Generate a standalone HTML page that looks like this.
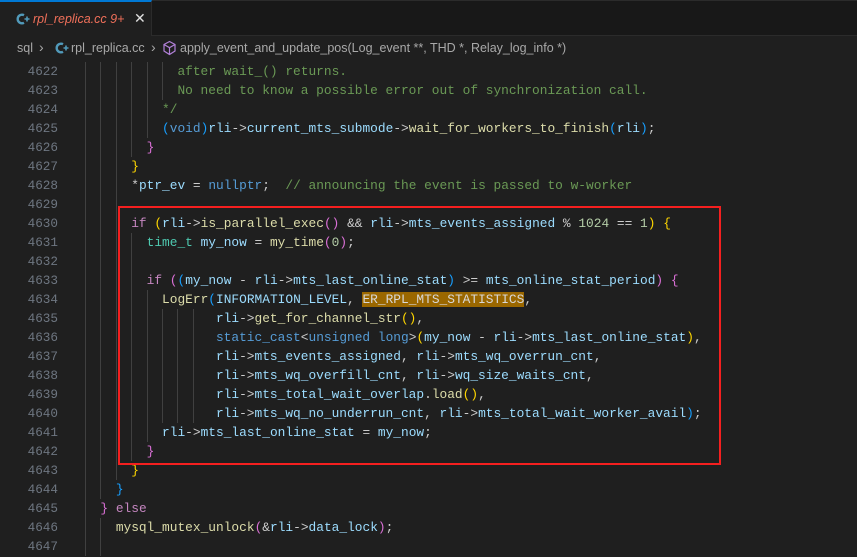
<!DOCTYPE html>
<html><head><meta charset="utf-8"><style>
*{margin:0;padding:0;box-sizing:border-box}
body{width:857px;height:555px;overflow:hidden;background:#1f1f1f;font-family:"Liberation Sans",sans-serif;position:relative}
.tabbar{position:absolute;left:0;top:0;width:857px;height:36px;background:#181818;border-top:1px solid #2b2b2b;border-bottom:1px solid #2b2b2b}
.tab{position:absolute;left:0;top:-1px;width:152px;height:36px;background:#1f1f1f;border-top:2px solid #0078d4;border-right:1px solid #2b2b2b}
.tab .nm{position:absolute;left:33px;top:10px;font-size:12.5px;font-style:italic;color:#f0705a}
.tab .x{position:absolute;left:134px;top:8px;font-size:14px;color:#e0e0e0}
.bc{position:absolute;left:0;top:36px;width:857px;height:24px;font-size:12.5px;color:#a9a9a9}
.bc span{position:absolute;top:5px}
.code{position:absolute;left:0;top:0;font-family:"Liberation Mono",monospace;font-size:12.85px;white-space:pre}
.ln{position:absolute;width:58px;text-align:right;color:#6e7681;line-height:19px;font-size:12.67px}
.l{position:absolute;left:85px;line-height:20px;height:19px;color:#cccccc}
i{display:inline-block;width:2ch;height:19px;vertical-align:top;box-shadow:inset 1px 0 #404040}
.v{color:#9cdcfe}.f{color:#dcdcaa}.k{color:#569cd6}.c{color:#c586c0}.t{color:#4ec9b0}.m{color:#6a9955}.n{color:#b5cea8}
.y{color:#ffd700}.p{color:#da70d6}.b{color:#179fff}
.hl{background:#9a6700;color:#d8d8d8}
.box{position:absolute;left:118px;top:206px;width:603px;height:259px;border:2px solid #f41f1f}
</style></head><body>
<div class="tabbar"><div class="tab">
<svg style="position:absolute;left:15px;top:10px" width="16" height="14" viewBox="0 0 16 14"><path d="M9 3.2A4.3 4.3 0 1 0 9 10.8" fill="none" stroke="#519aba" stroke-width="2.4"/><path d="M9.5 7h5M12 4.5v5" stroke="#519aba" stroke-width="1.6"/></svg>
<span class="nm">rpl_replica.cc 9+</span><span class="x">✕</span></div></div>
<div class="bc">
<span style="left:17px">sql</span><span style="left:39px;font-size:14px;top:3px">›</span>
<svg style="position:absolute;left:54px;top:5px" width="16" height="14" viewBox="0 0 16 14"><path d="M9 3.2A4.3 4.3 0 1 0 9 10.8" fill="none" stroke="#519aba" stroke-width="2.4"/><path d="M9.5 7h5M12 4.5v5" stroke="#519aba" stroke-width="1.6"/></svg>
<span style="left:71px">rpl_replica.cc</span><span style="left:151px;font-size:14px;top:3px">›</span>
<svg style="position:absolute;left:162px;top:4px" width="15" height="16" viewBox="0 0 15 16"><path d="M7.5 1.5L13 4.5V11L7.5 14.5L2 11V4.5Z M2 4.5L7.5 7.7L13 4.5 M7.5 7.7V14.5" fill="none" stroke="#b180d7" stroke-width="1.2"/></svg>
<span style="left:180px">apply_event_and_update_pos(Log_event **, THD *, Relay_log_info *)</span>
</div>
<div class="code">
<div class="ln" style="top:62px">4622</div><div class="l" style="top:62px"><i></i><i></i><i></i><i></i><i></i><i></i><span class="m">after wait_() returns.</span></div>
<div class="ln" style="top:81px">4623</div><div class="l" style="top:81px"><i></i><i></i><i></i><i></i><i></i><i></i><span class="m">No need to know a possible error out of synchronization call.</span></div>
<div class="ln" style="top:100px">4624</div><div class="l" style="top:100px"><i></i><i></i><i></i><i></i><i></i><span class="m">*/</span></div>
<div class="ln" style="top:119px">4625</div><div class="l" style="top:119px"><i></i><i></i><i></i><i></i><i></i><span class="b">(</span><span class="k">void</span><span class="b">)</span><span class="v">rli</span>-&gt;<span class="v">current_mts_submode</span>-&gt;<span class="f">wait_for_workers_to_finish</span><span class="b">(</span><span class="v">rli</span><span class="b">)</span>;</div>
<div class="ln" style="top:138px">4626</div><div class="l" style="top:138px"><i></i><i></i><i></i><i></i><span class="p">}</span></div>
<div class="ln" style="top:157px">4627</div><div class="l" style="top:157px"><i></i><i></i><i></i><span class="y">}</span></div>
<div class="ln" style="top:176px">4628</div><div class="l" style="top:176px"><i></i><i></i><i></i>*<span class="v">ptr_ev</span> = <span class="k">nullptr</span>;  <span class="m">// announcing the event is passed to w-worker</span></div>
<div class="ln" style="top:195px">4629</div><div class="l" style="top:195px"><i></i><i></i><i></i></div>
<div class="ln" style="top:214px">4630</div><div class="l" style="top:214px"><i></i><i></i><i></i><span class="c">if</span> <span class="y">(</span><span class="v">rli</span>-&gt;<span class="f">is_parallel_exec</span><span class="p">()</span> &amp;&amp; <span class="v">rli</span>-&gt;<span class="v">mts_events_assigned</span> % <span class="n">1024</span> == <span class="n">1</span><span class="y">)</span> <span class="y">{</span></div>
<div class="ln" style="top:233px">4631</div><div class="l" style="top:233px"><i></i><i></i><i></i><i></i><span class="t">time_t</span> <span class="v">my_now</span> = <span class="f">my_time</span><span class="p">(</span><span class="n">0</span><span class="p">)</span>;</div>
<div class="ln" style="top:252px">4632</div><div class="l" style="top:252px"><i></i><i></i><i></i><i></i></div>
<div class="ln" style="top:271px">4633</div><div class="l" style="top:271px"><i></i><i></i><i></i><i></i><span class="c">if</span> <span class="p">(</span><span class="b">(</span><span class="v">my_now</span> - <span class="v">rli</span>-&gt;<span class="v">mts_last_online_stat</span><span class="b">)</span> &gt;= <span class="v">mts_online_stat_period</span><span class="p">)</span> <span class="p">{</span></div>
<div class="ln" style="top:290px">4634</div><div class="l" style="top:290px"><i></i><i></i><i></i><i></i><i></i><span class="f">LogErr</span><span class="b">(</span><span class="v">INFORMATION_LEVEL</span>, <span class="hl">ER_RPL_MTS_STATISTICS</span>,</div>
<div class="ln" style="top:309px">4635</div><div class="l" style="top:309px"><i></i><i></i><i></i><i></i><i></i><i></i><i></i><i></i> <span class="v">rli</span>-&gt;<span class="f">get_for_channel_str</span><span class="y">()</span>,</div>
<div class="ln" style="top:328px">4636</div><div class="l" style="top:328px"><i></i><i></i><i></i><i></i><i></i><i></i><i></i><i></i> <span class="k">static_cast</span>&lt;<span class="k">unsigned</span> <span class="k">long</span>&gt;<span class="y">(</span><span class="v">my_now</span> - <span class="v">rli</span>-&gt;<span class="v">mts_last_online_stat</span><span class="y">)</span>,</div>
<div class="ln" style="top:347px">4637</div><div class="l" style="top:347px"><i></i><i></i><i></i><i></i><i></i><i></i><i></i><i></i> <span class="v">rli</span>-&gt;<span class="v">mts_events_assigned</span>, <span class="v">rli</span>-&gt;<span class="v">mts_wq_overrun_cnt</span>,</div>
<div class="ln" style="top:366px">4638</div><div class="l" style="top:366px"><i></i><i></i><i></i><i></i><i></i><i></i><i></i><i></i> <span class="v">rli</span>-&gt;<span class="v">mts_wq_overfill_cnt</span>, <span class="v">rli</span>-&gt;<span class="v">wq_size_waits_cnt</span>,</div>
<div class="ln" style="top:385px">4639</div><div class="l" style="top:385px"><i></i><i></i><i></i><i></i><i></i><i></i><i></i><i></i> <span class="v">rli</span>-&gt;<span class="v">mts_total_wait_overlap</span>.<span class="f">load</span><span class="y">()</span>,</div>
<div class="ln" style="top:404px">4640</div><div class="l" style="top:404px"><i></i><i></i><i></i><i></i><i></i><i></i><i></i><i></i> <span class="v">rli</span>-&gt;<span class="v">mts_wq_no_underrun_cnt</span>, <span class="v">rli</span>-&gt;<span class="v">mts_total_wait_worker_avail</span><span class="b">)</span>;</div>
<div class="ln" style="top:423px">4641</div><div class="l" style="top:423px"><i></i><i></i><i></i><i></i><i></i><span class="v">rli</span>-&gt;<span class="v">mts_last_online_stat</span> = <span class="v">my_now</span>;</div>
<div class="ln" style="top:442px">4642</div><div class="l" style="top:442px"><i></i><i></i><i></i><i></i><span class="p">}</span></div>
<div class="ln" style="top:461px">4643</div><div class="l" style="top:461px"><i></i><i></i><i></i><span class="y">}</span></div>
<div class="ln" style="top:480px">4644</div><div class="l" style="top:480px"><i></i><i></i><span class="b">}</span></div>
<div class="ln" style="top:499px">4645</div><div class="l" style="top:499px"><i></i><span class="p">}</span> <span class="c">else</span></div>
<div class="ln" style="top:518px">4646</div><div class="l" style="top:518px"><i></i><i></i><span class="f">mysql_mutex_unlock</span><span class="p">(</span>&amp;<span class="v">rli</span>-&gt;<span class="v">data_lock</span><span class="p">)</span>;</div>
<div class="ln" style="top:537px">4647</div><div class="l" style="top:537px"><i></i><i></i></div>
</div>
<div class="box"></div>
</body></html>
